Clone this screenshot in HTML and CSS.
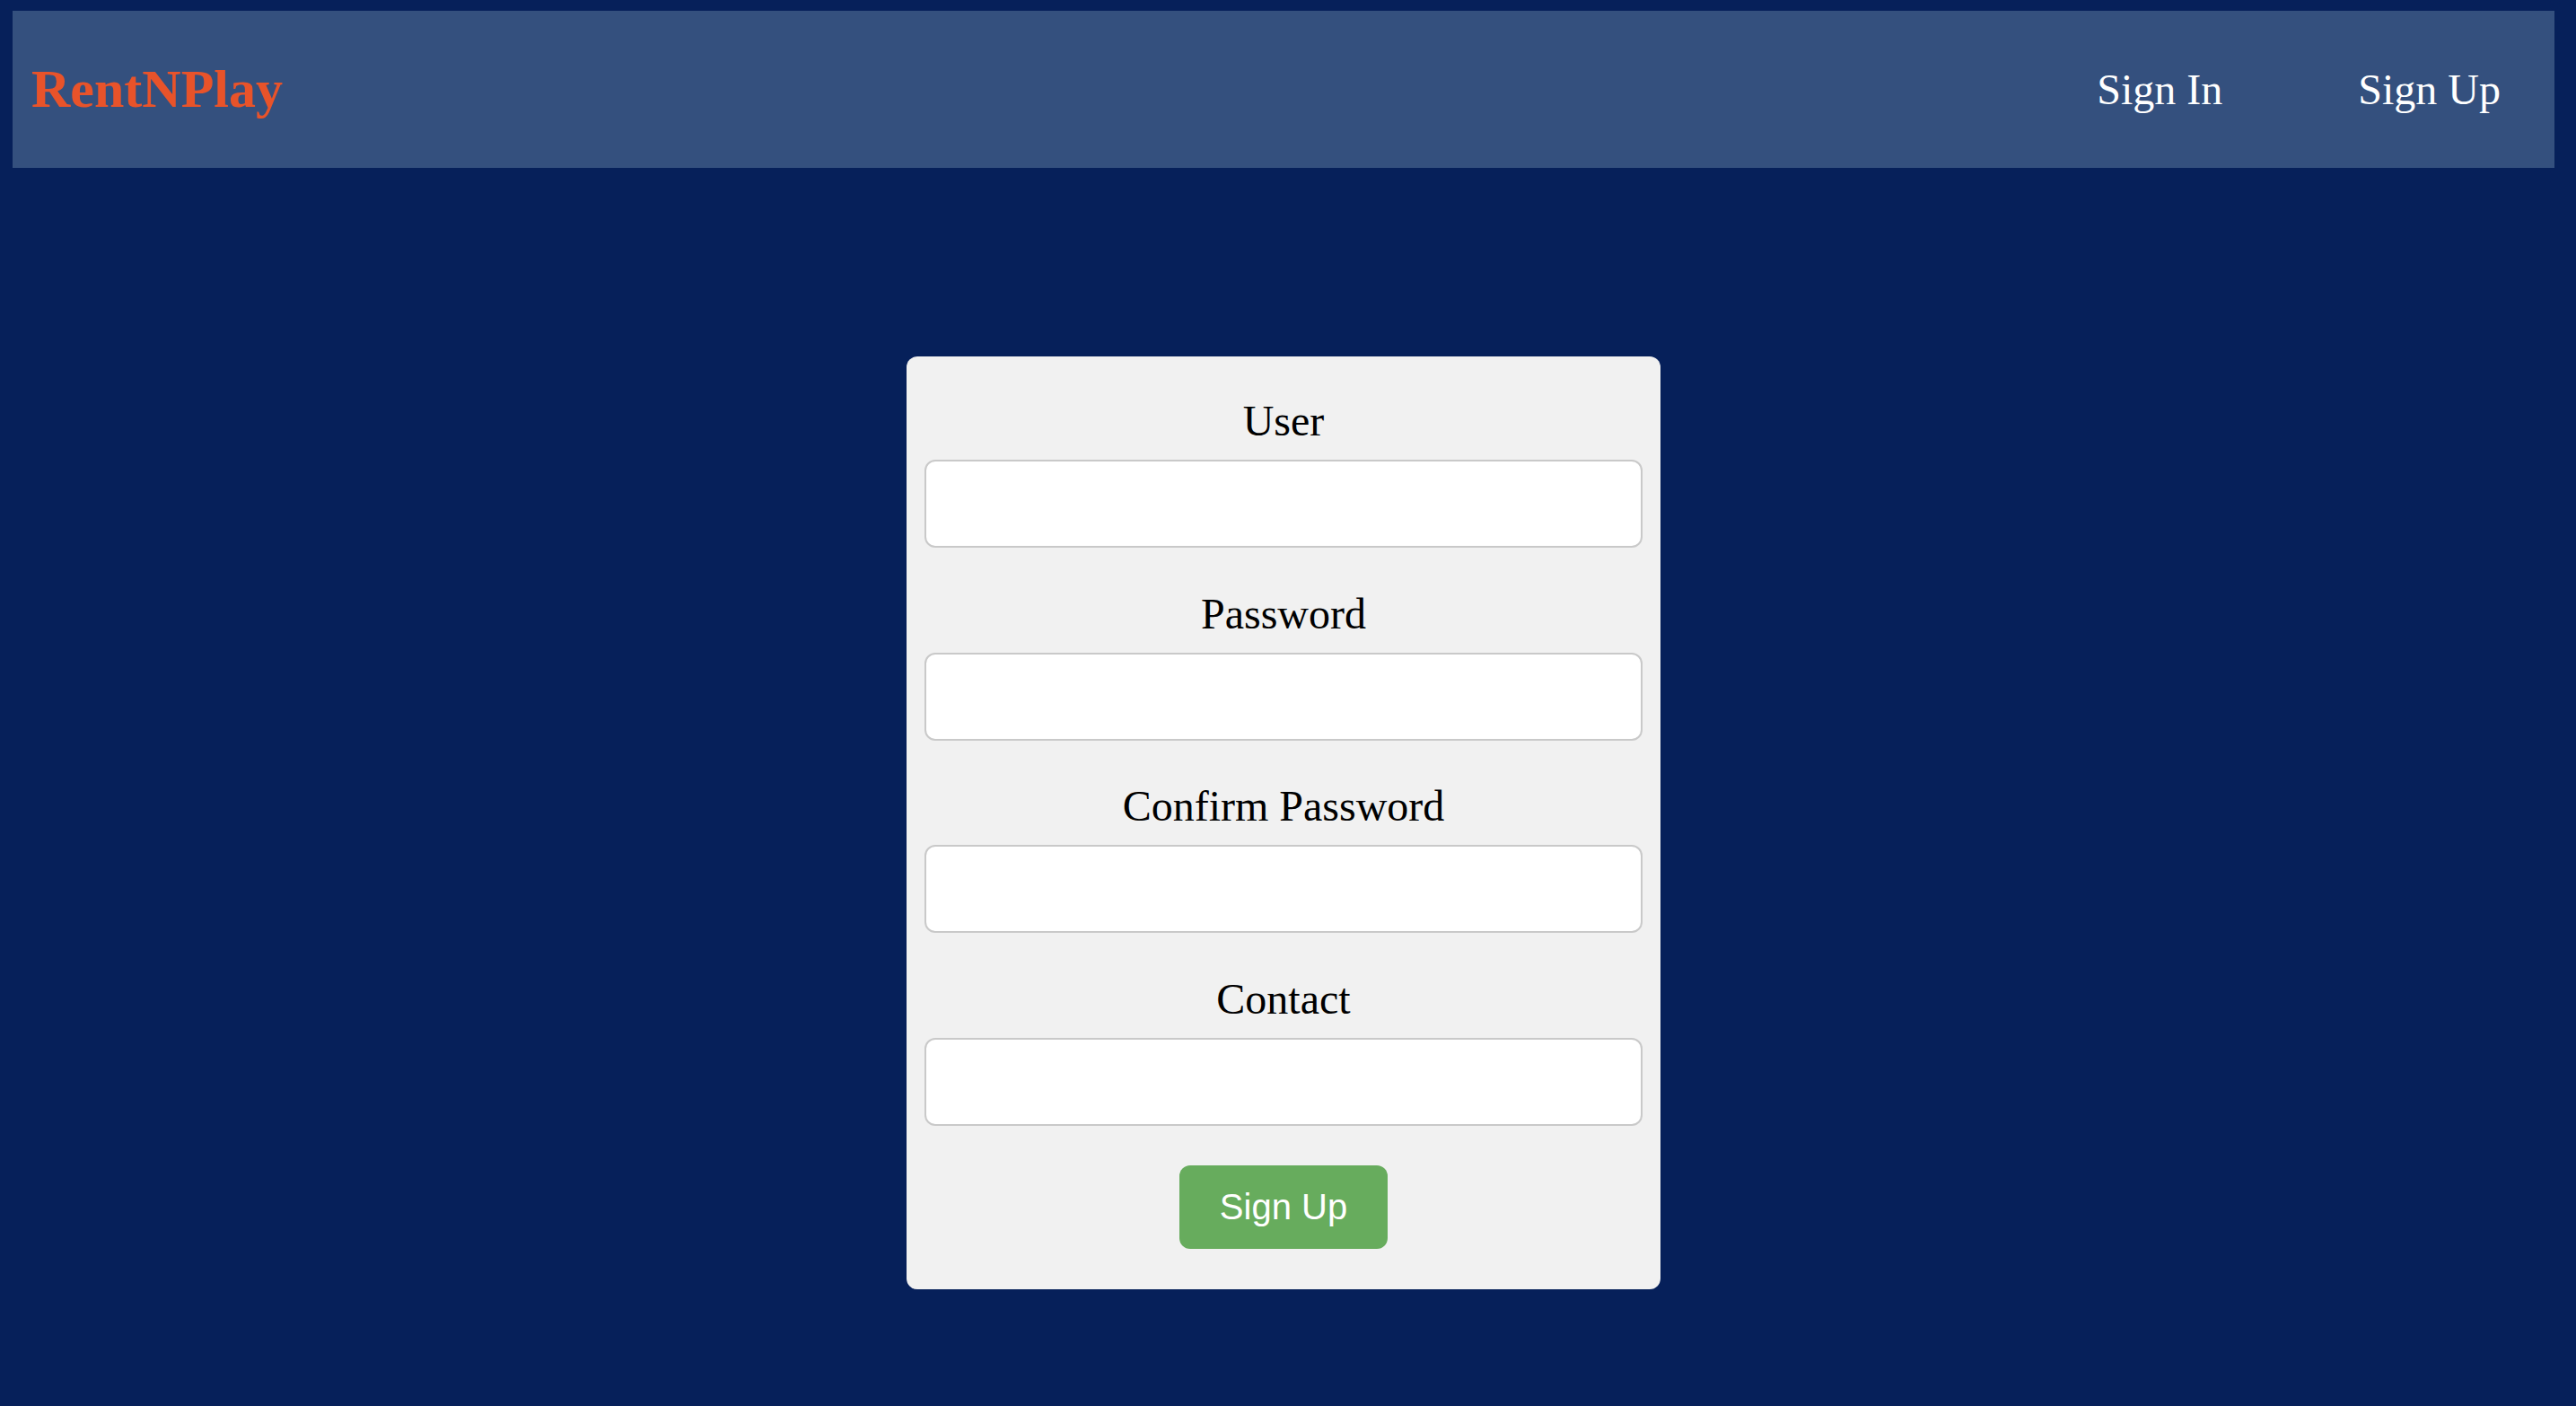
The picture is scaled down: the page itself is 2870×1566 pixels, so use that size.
FILE: index.html
```html
<!DOCTYPE html>
<html lang="en">
<head>
<meta charset="utf-8">
<title>RentNPlay - Sign Up</title>
<link rel="stylesheet" href="styles.css">
</head>
<body>
<header class="topbar">
  <a class="logo" href="#">RentNPlay</a>
  <nav class="nav">
    <a class="nav-link" href="#">Sign In</a>
    <a class="nav-link" href="#">Sign Up</a>
  </nav>
</header>
<main class="main">
  <form class="card">
    <div class="field">
      <label class="label" for="user">User</label>
      <input class="input" id="user" type="text">
    </div>
    <div class="field">
      <label class="label" for="pw">Password</label>
      <input class="input" id="pw" type="password">
    </div>
    <div class="field">
      <label class="label" for="pw2">Confirm Password</label>
      <input class="input" id="pw2" type="password">
    </div>
    <div class="field">
      <label class="label" for="contact">Contact</label>
      <input class="input" id="contact" type="text">
    </div>
    <div class="actions">
      <button class="btn" type="button">Sign Up</button>
    </div>
  </form>
</main>
</body>
</html>
```

FILE: styles.css
```css
html, body {
  margin: 0;
  background: #06205a;
}
body {
  padding: 12px 24px 0 14px;
  min-height: 1566px;
  box-sizing: border-box;
  font-family: "Liberation Serif", "Times New Roman", serif;
}
.topbar {
  display: flex;
  align-items: center;
  justify-content: space-between;
  height: 175px;
  padding: 0 60px 0 21px;
  background: #34507e;
  box-sizing: border-box;
}
.logo {
  font-size: 60px;
  font-weight: bold;
  color: #e8532a;
  text-decoration: none;
  line-height: normal;
}
.nav {
  display: flex;
  gap: 151px;
}
.nav-link {
  font-size: 48px;
  color: #ffffff;
  text-decoration: none;
  line-height: normal;
}
.main {
  display: flex;
  justify-content: center;
  padding-top: 210px;
}
.card {
  width: 840px;
  box-sizing: border-box;
  padding: 46px 20px 45px;
  background: #f1f1f1;
  border-radius: 12px;
  margin: 0;
}
.field + .field {
  margin-top: 47.5px;
}
.label {
  display: block;
  text-align: center;
  font-size: 48px;
  line-height: 51px;
  color: #000;
  margin-bottom: 18px;
}
.input {
  display: block;
  width: 100%;
  height: 98px;
  box-sizing: border-box;
  border: 2px solid #c9c9c9;
  border-radius: 12px;
  background: #ffffff;
  margin: 0;
  padding: 0 20px;
  font-size: 32px;
}
.actions {
  display: flex;
  justify-content: center;
  margin-top: 44.5px;
}
.btn {
  font-family: "Liberation Sans", Arial, sans-serif;
  font-size: 40px;
  line-height: 46px;
  padding: 23px 45px 24px;
  background: #67ac5d;
  color: #ffffff;
  border: none;
  border-radius: 12px;
  cursor: pointer;
}
```
